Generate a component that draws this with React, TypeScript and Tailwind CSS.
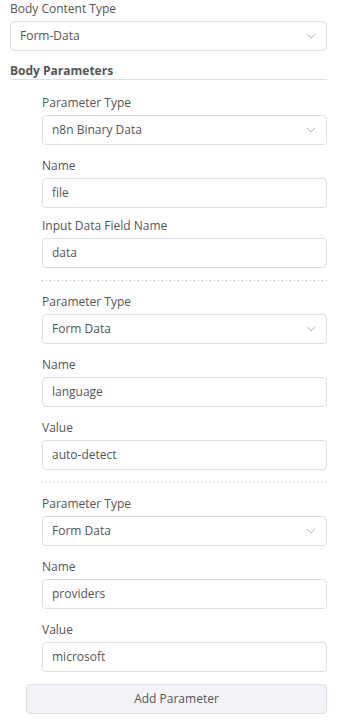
const groups = [
  {
    type: "n8n Binary Data",
    fields: [
      { label: "Name", value: "file", tight: false },
      { label: "Input Data Field Name", value: "data", tight: true },
    ],
  },
  {
    type: "Form Data",
    fields: [
      { label: "Name", value: "language", tight: false },
      { label: "Value", value: "auto-detect", tight: false },
    ],
  },
  {
    type: "Form Data",
    fields: [
      { label: "Name", value: "providers", tight: false },
      { label: "Value", value: "microsoft", tight: false },
    ],
  },
];

function Chevron() {
  return (
    <svg width="10" height="6" viewBox="0 0 10 6" className="shrink-0">
      <polyline points="1,1 5,5 9,1" fill="none" stroke="#b4b7bf" strokeWidth="1" />
    </svg>
  );
}

function Label({ text }: { text: string }) {
  return <div className="h-[18px] leading-[18px] mb-[3px] text-[12px] text-[#555]">{text}</div>;
}

function Select({ value }: { value: string }) {
  return (
    <div className="h-[30px] flex items-center justify-between pl-[9px] pr-[10px] border border-[#dcdfe6] rounded-[4px] bg-white text-[12px] text-[#555]">
      <span>{value}</span>
      <Chevron />
    </div>
  );
}

function Input({ value }: { value: string }) {
  return (
    <div className="h-[30px] flex items-center pl-[9px] border border-[#dcdfe6] rounded-[4px] bg-white text-[12px] text-[#555]">
      {value}
    </div>
  );
}

export default function App() {
  return (
    <div className="w-[341px] min-h-[728px] bg-white pl-[10px] pr-[14px] font-['Open_Sans',sans-serif]">
      <Label text="Body Content Type" />
      <Select value="Form-Data" />

      <div className="mt-[12px] h-[17px] leading-[16px] text-[12px] font-bold text-[#555] border-b border-[#dcdfe6]">
        Body Parameters
      </div>

      <div className="pl-[32px] pt-[14px]">
        {groups.map((g, gi) => (
          <div key={gi}>
            {gi > 0 && (
              <div className="h-px my-[12px] bg-[linear-gradient(to_right,#b8b8b8_1px,transparent_1px)] bg-[length:4px_1px]" />
            )}
            <div className="flex flex-col">
              <div>
                <Label text="Parameter Type" />
                <Select value={g.type} />
              </div>
              {g.fields.map((f, fi) => (
                <div key={fi} className={f.tight ? "mt-[9px]" : "mt-[12px]"}>
                  <Label text={f.label} />
                  <Input value={f.value} />
                </div>
              ))}
            </div>
          </div>
        ))}
      </div>

      <button className="mt-[12px] ml-[16px] w-[301px] h-[30px] flex items-center justify-center border border-[#dcdfe6] rounded-[4px] bg-[#f2f3f7] text-[12px] text-[#555]">
        Add Parameter
      </button>
    </div>
  );
}
